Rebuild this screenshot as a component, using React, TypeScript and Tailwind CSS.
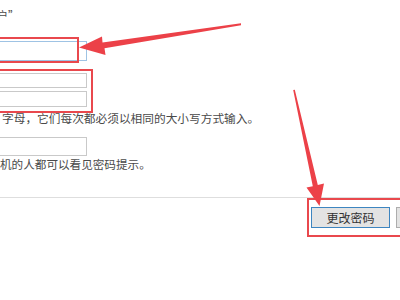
import React from 'react';

const font = { fontFamily: '"Noto Sans CJK SC", "Noto Sans", sans-serif' };

const Box: React.FC<{ className: string }> = ({ className }) => (
    <div className={`absolute border-2 border-[#e9484d] ${className}`} />
);

const Arrows: React.FC = () => (
    <svg className="absolute left-0 top-0 pointer-events-none" width="400" height="300" viewBox="0 0 400 300">
        {/* arrow to the first field */}
        <polygon fill="#ec4148" points="241,23.3 241,25.2 104.5,48.2 105.5,55 79,47.5 102,36.5 102.5,42.5" />
        {/* arrow to the button */}
        <polygon fill="#ec4148" points="293.2,90 294.8,89.7 317.8,185 324,183.5 319.5,206 306.5,187.5 312.8,186.2" />
    </svg>
);

const App: React.FC = () => {
    return (
        <div className="relative w-[400px] h-[300px] overflow-hidden bg-white text-[#4a4a4a]" style={font}>
            <div className="flex flex-col">
                <div className="mt-[9px] h-[12px] leading-[12px] text-[11px] -ml-[3px] whitespace-nowrap">户”</div>
                <div className="mt-[20px] h-[20px] w-[107px] -ml-[20px] border border-[#9fc3e4] bg-white" />
                <div className="mt-[12px] h-[15px] w-[107px] -ml-[20px] border border-[#c9c9c9] bg-white" />
                <div className="mt-[3px] h-[16px] w-[107px] -ml-[20px] border border-[#c9c9c9] bg-white" />
                <div className="mt-[4px] h-[14px] leading-[14px] text-[11.7px] pl-[2px] whitespace-nowrap">字母，它们每次都必须以相同的大小写方式输入。</div>
                <div className="mt-[12px] h-[19px] w-[107px] -ml-[20px] border border-[#c9c9c9] bg-white" />
                <div className="mt-[1px] h-[14px] leading-[14px] text-[11.6px] whitespace-nowrap">机的人都可以看见密码提示。</div>
                <div className="mt-[26px] border-t border-[#dedede]" />
                <div className="mt-[9px] flex gap-[6px] pl-[311px]">
                    <button className="h-[21px] w-[79px] shrink-0 border border-[#3d85c0] bg-[#e3e3e3] text-[12px] leading-[19px] text-[#333]">更改密码</button>
                    <button className="h-[21px] w-[79px] shrink-0 border border-[#adadad] bg-[#e3e3e3] text-[12px] leading-[19px] text-[#333]">取消</button>
                </div>
            </div>
            <Box className="-left-[4px] top-[37px] w-[83px] h-[26px]" />
            <Box className="-left-[4px] top-[69px] w-[97px] h-[44px]" />
            <Box className="left-[307px] top-[198px] w-[100px] h-[39px]" />
            <Arrows />
        </div>
    );
};

export default App;
